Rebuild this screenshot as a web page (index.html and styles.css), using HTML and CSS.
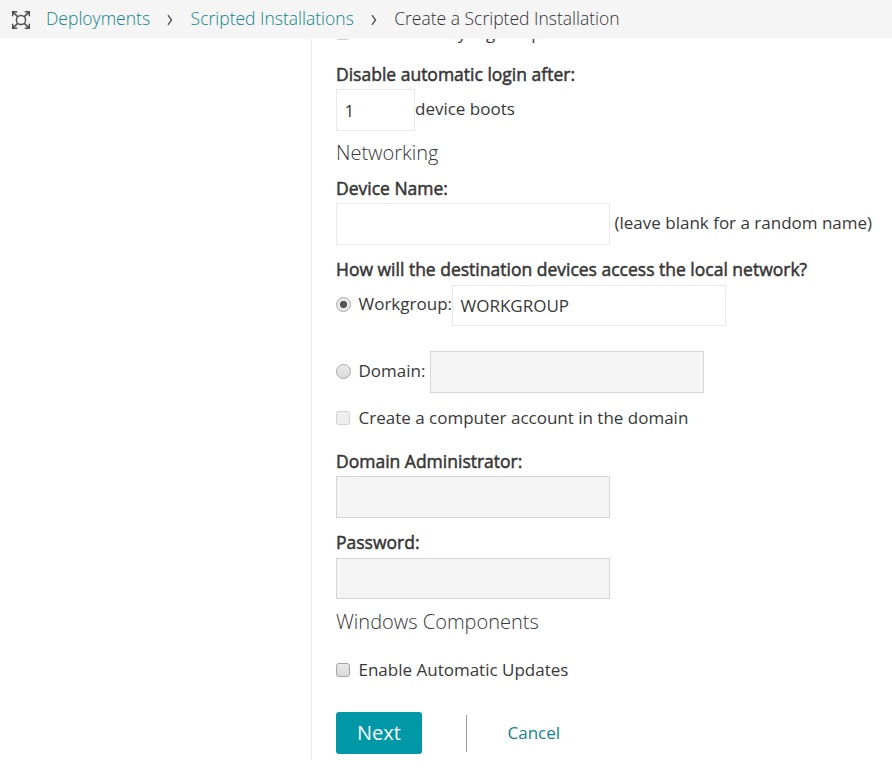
FILE: index.html
```
<!DOCTYPE html>
<html lang="en">
<head>
<meta charset="utf-8">
<title>Create a Scripted Installation</title>
<link rel="stylesheet" href="styles.css">
</head>
<body>
<header class="topbar">
  <svg class="expand" width="20" height="20" viewBox="0 0 20 20" fill="none" stroke="#505050" stroke-width="1.5">
    <circle cx="10" cy="10" r="4.6"/>
    <path d="M1.7 6.2V1.7H6.2M13.8 1.7H18.3V6.2M18.3 13.8V18.3H13.8M6.2 18.3H1.7V13.8M1.7 1.7L6.6 6.6M18.3 1.7L13.4 6.6M18.3 18.3L13.4 13.4M1.7 18.3L6.6 13.4"/>
  </svg>
  <nav class="crumbs">
    <a class="crumb crumb-first">Deployments</a>
    <svg class="chevron" width="6" height="12" viewBox="0 0 6 12" fill="none" stroke="#555" stroke-width="1.4"><path d="M1 1.2L4.5 6L1 10.8"/></svg>
    <a class="crumb crumb-second">Scripted Installations</a>
    <svg class="chevron" width="6" height="12" viewBox="0 0 6 12" fill="none" stroke="#555" stroke-width="1.4"><path d="M1 1.2L4.5 6L1 10.8"/></svg>
    <span class="crumb crumb-current">Create a Scripted Installation</span>
  </nav>
</header>
<main class="panel">
  <div class="scrolled"><span class="check muted"></span><span>Automatically log in upon</span></div>
  <div class="label label-login">Disable automatic login after:</div>
  <div class="row"><div class="input short">1</div><span class="after">device boots</span></div>
  <h2 class="networking">Networking</h2>
  <div class="label label-device">Device Name:</div>
  <div class="row"><div class="input"></div><span class="after hint">(leave blank for a random name)</span></div>
  <div class="label label-network spaced">How will the destination devices access the local network?</div>
  <div class="row low"><span class="radio on"></span><span class="option workgroup">Workgroup:</span><div class="input">WORKGROUP</div></div>
  <div class="row domain-row"><span class="radio"></span><span class="option domain">Domain:</span><div class="input disabled"></div></div>
  <div class="check-row"><span class="check muted"></span><span class="create">Create a computer account in the domain</span></div>
  <div class="label label-admin">Domain Administrator:</div>
  <div class="row"><div class="input disabled"></div></div>
  <div class="label label-password spaced">Password:</div>
  <div class="row low"><div class="input disabled"></div></div>
  <h2 class="components">Windows Components</h2>
  <div class="check-row"><span class="check"></span><span class="updates">Enable Automatic Updates</span></div>
  <div class="actions"><button class="next">Next</button><span class="divider"></span><a class="cancel">Cancel</a></div>
</main>
</body>
</html>
```
FILE: styles.css
```
* { box-sizing: border-box; }
body {
  margin: 0;
  height: 779px;
  overflow: hidden;
  background: #fff;
  color: #383838;
  font: 400 17px/24px "Open Sans", sans-serif;
  white-space: nowrap;
}
.topbar {
  display: flex;
  align-items: center;
  height: 39px;
  padding-left: 11px;
  background: #f5f5f5;
}
.crumbs { display: flex; align-items: center; margin: -3px 0 0 15px; height: 36px; font-size: 17.5px; font-weight: 300; }
.crumb { color: #12838a; }
.crumb-first { width: 104px; }
.crumb-second { width: 163px; }
.crumb-current { color: #333; }
.chevron { margin: 3px 17.6px 0 17px; }
.panel {
  margin-left: 311px;
  height: 721px;
  padding-left: 24px;
  border-left: 1px solid #e9e9e9;
  overflow: hidden;
}
.scrolled { display: flex; align-items: center; height: 24px; margin-top: -18px; margin-bottom: 16px; word-spacing: 1px; }
.label { height: 28px; line-height: 26px; font-size: 17.5px; -webkit-text-stroke: 0.5px #333; }
.spaced { margin: 11px 0 1px; }
.row { display: flex; align-items: center; height: 42px; }
.input {
  width: 274px;
  height: 100%;
  padding: 1px 7.5px 0;
  border: 1px solid #e8e8e8;
  line-height: 40px;
}
.short { width: 79px; }
.disabled { background: #f5f5f5; border-color: #d5d5d5; }
.low { height: 41px; }
.low .input { padding-top: 0; }
.after { margin: -3px 0 0 0; }
.hint { margin-left: 4.5px; }
h2 { margin: 0; height: 44px; font-size: 20px; line-height: 43px; font-weight: 300; }
.components { height: 46px; line-height: 45px; }
.radio {
  width: 15px;
  height: 15px;
  border: 1px solid #aaa;
  border-radius: 50%;
  background: linear-gradient(#ececec, #d9d9d9);
}
.on { background: radial-gradient(circle, #555 0 3.2px, #e8e8e8 4px); margin-top: -2px; }
.option { margin-left: 7.5px; }
.workgroup { width: 93.5px; margin-top: -3px; }
.domain { width: 71.5px; margin-top: -2px; }
.domain-row { margin-top: 25px; }
.domain-row .radio { margin-top: -2px; }
.check-row { display: flex; align-items: center; height: 50px; }
.check {
  width: 14px;
  height: 14px;
  margin-right: 8.5px;
  border: 1px solid #a5a5a5;
  border-radius: 3px;
  background: linear-gradient(#e9e9e9, #dadada);
}
.muted { border-color: #d0d0d0; background: #efefef; }
.label-admin { margin-top: 5px; }
.actions { display: flex; align-items: center; height: 42px; margin-top: 17px; }
.next {
  width: 86px;
  height: 42px;
  padding: 0;
  border: 0;
  border-radius: 3px;
  background: #0097a7;
  color: #fff;
  font: 400 20px/42px "Open Sans", sans-serif;
}
.divider { width: 1px; height: 37px; margin: 0 40.5px 0 44px; background: #999; }
.cancel { color: #12838a; }
```
